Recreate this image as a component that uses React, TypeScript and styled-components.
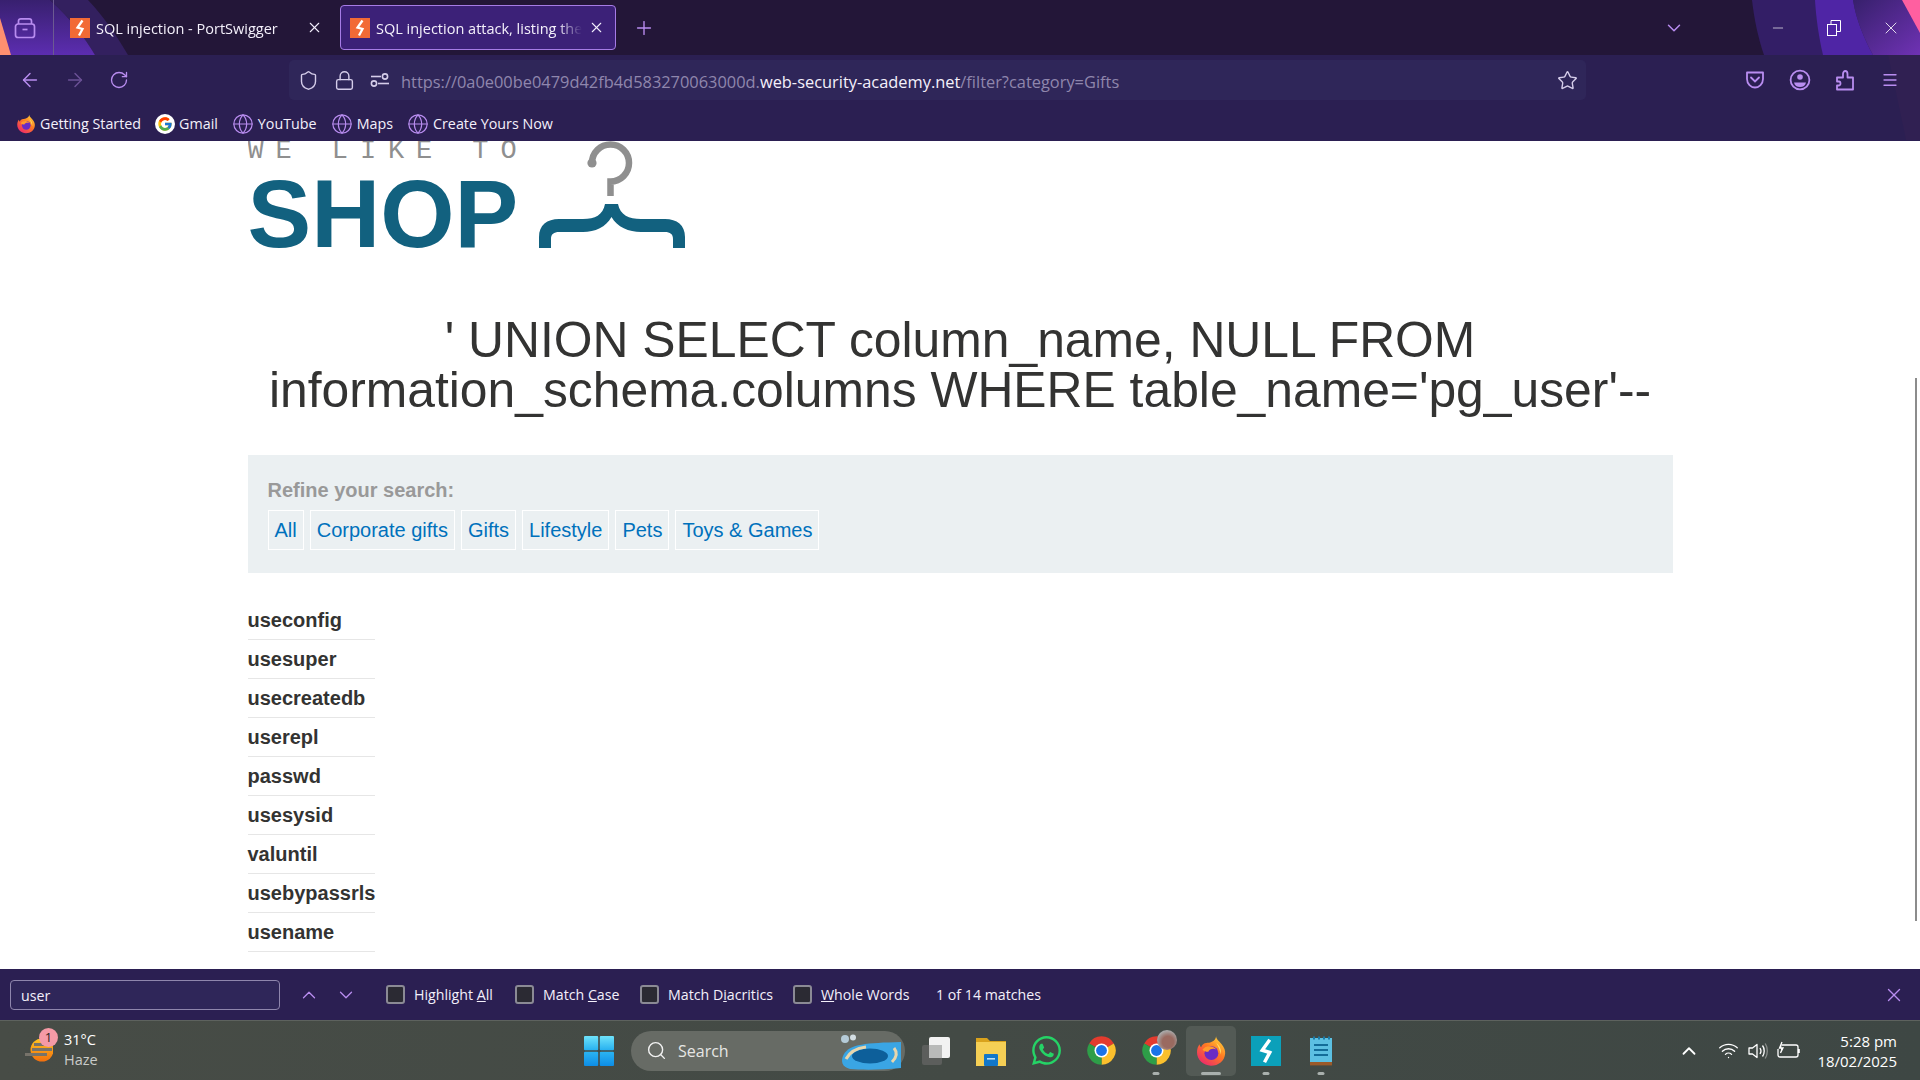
import styled, { createGlobalStyle } from 'styled-components';
import {
    ArrowLeft,
    ArrowRight,
    ChevronDown,
    ChevronUp,
    Globe,
    Lock,
    Menu,
    Minus,
    Plus,
    RotateCw,
    Search,
    Shield,
    Star,
    Wifi,
    X,
} from 'lucide-react';
import { FaWhatsapp } from 'react-icons/fa';
import { FcGoogle } from 'react-icons/fc';

const UI_FONT = '"Open Sans", "Noto Sans", sans-serif';
const ACCENT = '#b98df0';

const GlobalStyle = createGlobalStyle`
    html, body {
        margin: 0;
        padding: 0;
        height: 100%;
        overflow: hidden;
        background: #fff;
    }
    * {
        box-sizing: border-box;
    }
`;

const Bolt = ({ bg, size }: { bg: string; size: number }) => (
    <svg width={size} height={size} viewBox="0 0 20 20">
        <rect width="20" height="20" fill={bg} />
        <path d="M12.5 2.5 L7.5 9.5 L12.5 11 L9 17.5" fill="none" stroke="#fff" strokeWidth="2.3" />
    </svg>
);

const FirefoxIcon = ({ size, id }: { size: number; id: string }) => (
    <svg width={size} height={size} viewBox="0 0 24 24">
        <defs>
            <linearGradient id={id} x1="0.85" y1="0.05" x2="0.2" y2="0.95">
                <stop offset="0" stopColor="#ffd23a" />
                <stop offset="0.45" stopColor="#ff7a22" />
                <stop offset="1" stopColor="#ee2a6b" />
            </linearGradient>
        </defs>
        <path
            d="M15.8 1 C16 3.5 18.4 4.8 20 7 C22 9.6 22.8 11.8 22.6 14 C22.2 19.4 17.6 23 12 23 C6.2 23 1.5 18.6 1.5 13 C1.5 10.6 2.2 8.6 3.4 7 C3.6 8 4 8.8 4.6 9.2 C5.2 7.2 6.8 6 8.5 6 C11 6 15.6 5 15.8 1 Z"
            fill={`url(#${id})`}
        />
        <circle cx="12.3" cy="13.6" r="5.2" fill="#6a2bc4" />
        <path d="M5.6 11 C8 7.8 13 7.6 16 10.8 C13.6 9.8 10.6 10.6 10 12.6 C8.6 12.8 7 12.2 5.6 11 Z" fill="#ff9a2c" />
        <path d="M16 6 C18.6 8 20 11 19.4 14.6 C18.8 11.4 17.6 8.8 16 6 Z" fill="#ffe066" />
    </svg>
);

const ChromeIcon = ({ size }: { size: number }) => (
    <svg width={size} height={size} viewBox="0 0 24 24">
        <path d="M12 12 L2.47 6.5 A11 11 0 0 1 21.53 6.5 Z" fill="#e33b2e" />
        <path d="M12 12 L21.53 6.5 A11 11 0 0 1 12 23 Z" fill="#fbc02d" />
        <path d="M12 12 L12 23 A11 11 0 0 1 2.47 6.5 Z" fill="#2e9e48" />
        <circle cx="12" cy="12" r="5.4" fill="#fff" />
        <circle cx="12" cy="12" r="4.2" fill="#1a73e8" />
    </svg>
);

const CollectionIcon = () => (
    <svg width="22" height="22" viewBox="0 0 22 22" fill="none" stroke={ACCENT} strokeWidth="1.7">
        <path d="M4.5 7 V4 C4.5 2.6 5.4 1.8 6.8 1.8 H15.2 C16.6 1.8 17.5 2.6 17.5 4 V7" />
        <rect x="1.5" y="7" width="19" height="13.5" rx="2.6" />
        <path d="M8.5 12.5 H13.5" />
    </svg>
);

const PermissionIcon = () => (
    <svg width="20" height="16" viewBox="0 0 20 16" fill="none" stroke="#d5cdea" strokeWidth="1.6">
        <path d="M1 4.5 H11" />
        <circle cx="15" cy="4.5" r="2.6" />
        <circle cx="4" cy="11.5" r="2.6" />
        <path d="M8 11.5 H19" />
    </svg>
);

const PocketIcon = () => (
    <svg width="20" height="18" viewBox="0 0 20 18" fill="none" stroke={ACCENT} strokeWidth="1.8">
        <path d="M2 1.5 H18 V8 C18 12.8 14 16.5 10 16.5 C6 16.5 2 12.8 2 8 Z" strokeLinejoin="round" />
        <path d="M6 6.5 L10 10.5 L14 6.5" strokeLinecap="round" />
    </svg>
);

const AccountIcon = () => (
    <svg width="22" height="22" viewBox="0 0 22 22" fill="none">
        <circle cx="11" cy="11" r="9.4" stroke={ACCENT} strokeWidth="1.8" />
        <circle cx="11" cy="8" r="2.8" fill={ACCENT} />
        <path d="M5 13.5 H17 C16.5 16.5 14 18 11 18 C8 18 5.5 16.5 5 13.5 Z" fill={ACCENT} />
    </svg>
);

const PuzzleIcon = () => (
    <svg width="20" height="22" viewBox="0 0 20 22" fill="none" stroke={ACCENT} strokeWidth="1.8" strokeLinejoin="round">
        <path d="M2 20.5 V16.5 H4 C6 16.5 6 12.5 4 12.5 H2 V8.5 H8 V5 C8 1 12.5 1 12.5 5 V8.5 H18 V20.5 Z" />
    </svg>
);

const RestoreIcon = () => (
    <svg width="14" height="16" viewBox="0 0 14 16" fill="none" stroke="#fff" strokeWidth="1">
        <rect x="0.5" y="4.5" width="9" height="11" />
        <path d="M4 4.5 V0.5 H13.5 V11.5 H9.5" />
    </svg>
);

const WeatherIcon = () => (
    <svg width="28" height="28" viewBox="0 0 28 28">
        <defs>
            <linearGradient id="sun-fill" x1="0" y1="0" x2="0" y2="1">
                <stop offset="0" stopColor="#ffc51f" />
                <stop offset="1" stopColor="#f26f0e" />
            </linearGradient>
        </defs>
        <circle cx="17" cy="13" r="11.5" fill="url(#sun-fill)" />
        <path d="M9 7.5 H26 M7 12.5 H27 M0 17.5 H22" stroke="#77736a" strokeWidth="2.8" />
    </svg>
);

const WindowsIcon = () => (
    <svg width="30" height="30" viewBox="0 0 30 30">
        <defs>
            <linearGradient id="win-top" x1="0" y1="0" x2="0" y2="1">
                <stop offset="0" stopColor="#6fe3fb" />
                <stop offset="1" stopColor="#27b0f0" />
            </linearGradient>
            <linearGradient id="win-bottom" x1="0" y1="0" x2="0" y2="1">
                <stop offset="0" stopColor="#2bb4f2" />
                <stop offset="1" stopColor="#0d8de6" />
            </linearGradient>
        </defs>
        <rect x="0" y="0" width="14.2" height="14.2" rx="1" fill="url(#win-top)" />
        <rect x="15.8" y="0" width="14.2" height="14.2" rx="1" fill="url(#win-top)" />
        <rect x="0" y="15.8" width="14.2" height="14.2" rx="1" fill="url(#win-bottom)" />
        <rect x="15.8" y="15.8" width="14.2" height="14.2" rx="1" fill="url(#win-bottom)" />
    </svg>
);

const SearchPicture = () => (
    <svg width="70" height="38" viewBox="0 0 70 38">
        <circle cx="13" cy="7" r="4" fill="#b5cbd8" />
        <circle cx="21" cy="5.5" r="3" fill="#d3dee3" />
        <path d="M12 22 C18 12 34 11 69 10 V36 C50 38 30 38 18 37 C10 35 8 29 12 22 Z" fill="#3aa5e4" />
        <ellipse cx="38" cy="24" rx="18" ry="7.5" fill="#0d5f9a" />
        <path d="M14 27 C18 19 26 16 34 15" stroke="#e8d6ad" strokeWidth="3" fill="none" />
        <path d="M62 16 C66 21 64 26 60 30" stroke="#e8d6ad" strokeWidth="3" fill="none" />
    </svg>
);

const TaskViewIcon = () => (
    <svg width="30" height="30" viewBox="0 0 30 30">
        <rect x="1" y="9" width="20" height="20" rx="2" fill="#5c5e5c" />
        <rect x="8" y="1" width="21" height="21" rx="2" fill="#f2f2f2" />
        <rect x="8" y="9" width="13" height="13" fill="#b9bab9" />
    </svg>
);

const FolderIcon = () => (
    <svg width="30" height="30" viewBox="0 0 30 30">
        <path d="M0 2 H11 L14 5 H30 V30 H0 Z" fill="#d9a21c" />
        <rect y="6" width="30" height="24" fill="#f5cf55" />
        <rect x="8" y="18" width="14" height="12" rx="1" fill="#1277c9" />
        <rect x="11" y="22" width="8" height="1.6" fill="#b9e0f7" />
    </svg>
);

const NotepadIcon = () => (
    <svg width="24" height="30" viewBox="0 0 24 30">
        <rect x="1" y="2" width="22" height="25" fill="#5cc0e2" />
        <rect x="1" y="26" width="22" height="3.4" fill="#9b5a2a" />
        <path d="M4 2 H21" stroke="#1b7aa6" strokeWidth="3" strokeDasharray="2 3" />
        <path d="M5 9 H19 M5 14 H19 M5 19 H19" stroke="#136d99" strokeWidth="2" />
    </svg>
);

const VolumeIcon = () => (
    <svg width="20" height="18" viewBox="0 0 20 18" fill="none" stroke="#fff" strokeWidth="1.3">
        <path d="M1 6 H4.5 L9 2.5 V15.5 L4.5 12 H1 Z" strokeLinejoin="round" />
        <path d="M12 6 C13.2 7.8 13.2 10.2 12 12" />
        <path d="M14.5 3.5 C16.8 6.5 16.8 11.5 14.5 14.5" />
        <path d="M17.2 1.5 C20 5.5 20 12.5 17.2 16.5" stroke="#8b8f8c" />
    </svg>
);

const BatteryIcon = () => (
    <svg width="24" height="20" viewBox="0 0 24 20" fill="none" stroke="#fff" strokeWidth="1.3">
        <path d="M5 4 H19 C20.2 4 21 4.8 21 6 V14 C21 15.2 20.2 16 19 16 H3 C1.8 16 1 15.2 1 14 V8" />
        <path d="M21.8 8 V12" strokeWidth="2" />
        <path d="M5 1 L2.5 7 H6 L3.5 12" fill="#fff" />
    </svg>
);

const Bookmark = ({ icon, label }: { icon: React.ReactNode; label: string }) => (
    <BookmarkItem>
        {icon}
        <span>{label}</span>
    </BookmarkItem>
);

const tabs = [
    { title: 'SQL injection - PortSwigger', active: false },
    { title: 'SQL injection attack, listing the database contents', active: true },
];

const categories = ['All', 'Corporate gifts', 'Gifts', 'Lifestyle', 'Pets', 'Toys & Games'];

const columns = ['useconfig', 'usesuper', 'usecreatedb', 'userepl', 'passwd', 'usesysid', 'valuntil', 'usebypassrls', 'usename'];

const findOptions = [
    { before: 'Highlight ', key: 'A', after: 'll', width: 129 },
    { before: 'Match ', key: 'C', after: 'ase', width: 125 },
    { before: 'Match D', key: 'i', after: 'acritics', width: 153 },
    { before: '', key: 'W', after: 'hole Words', width: 134 },
];

const App = () => (
    <>
        <GlobalStyle />
        <Window>
            <BrowserTop>
                <ThemeArt width="1920" height="141" viewBox="0 0 1920 141">
                    <defs>
                        <linearGradient id="art-left" x1="0" y1="0" x2="0" y2="1">
                            <stop offset="0" stopColor="#38206f" />
                            <stop offset="1" stopColor="#5c2db0" />
                        </linearGradient>
                        <linearGradient id="art-right" x1="0" y1="0" x2="1" y2="1">
                            <stop offset="0" stopColor="#37206c" />
                            <stop offset="1" stopColor="#6f32b4" />
                        </linearGradient>
                    </defs>
                    <path d="M50 0 H88 C105 18 118 38 128 55 H95 C85 38 70 18 50 0 Z" fill="#33205f" />
                    <path d="M0 0 H50 C70 18 85 38 95 55 H0 Z" fill="url(#art-left)" />
                    <path d="M0 18 L11 55 H0 Z" fill="#ff8f70" />
                    <path d="M1752 0 H1920 V55 H1764 C1758 38 1754 18 1752 0 Z" fill="#331e66" />
                    <path d="M1815 0 H1853 C1856 20 1865 40 1873 55 H1823 C1819 38 1816 18 1815 0 Z" fill="#4f25a5" />
                    <path d="M1853 0 H1920 V55 H1873 C1865 40 1856 20 1853 0 Z" fill="url(#art-right)" />
                    <path d="M1902 0 H1920 V33 Z" fill="#ff5fa0" />
                    <path d="M1888 55 L1906 140 H1920 V55 Z" fill="#302052" />
                </ThemeArt>
                <TabBar>
                    <CollectionButton>
                        <CollectionIcon />
                    </CollectionButton>
                    <TabList>
                        {tabs.map((tab) => (
                            <Tab key={tab.title} $active={tab.active}>
                                <Bolt bg="#f26a35" size={20} />
                                <TabTitle>{tab.title}</TabTitle>
                                <X size={17} color="#f2eefc" strokeWidth={1.5} />
                            </Tab>
                        ))}
                    </TabList>
                    <NewTab>
                        <Plus size={22} color={ACCENT} strokeWidth={1.5} />
                    </NewTab>
                    <TabOverflow>
                        <ChevronDown size={22} color={ACCENT} strokeWidth={1.6} />
                    </TabOverflow>
                    <WindowButtons>
                        <WindowButton>
                            <Minus size={16} color="#fff" strokeWidth={1} />
                        </WindowButton>
                        <WindowButton>
                            <RestoreIcon />
                        </WindowButton>
                        <WindowButton>
                            <X size={20} color="#fff" strokeWidth={1} />
                        </WindowButton>
                    </WindowButtons>
                </TabBar>
                <NavBar>
                    <NavButtons>
                        <ArrowLeft size={22} color={ACCENT} strokeWidth={1.6} />
                        <ArrowRight size={22} color="#6b5196" strokeWidth={1.6} />
                        <RotateCw size={20} color={ACCENT} strokeWidth={1.6} />
                    </NavButtons>
                    <UrlBar>
                        <UrlIcons>
                            <Shield size={21} color="#d5cdea" strokeWidth={1.6} />
                            <Lock size={21} color="#d5cdea" strokeWidth={1.6} />
                            <PermissionIcon />
                        </UrlIcons>
                        <UrlText>
                            https://0a0e00be0479d42fb4d583270063000d.<UrlDomain>web-security-academy.net</UrlDomain>/filter?category=Gifts
                        </UrlText>
                        <Star size={21} color="#d5cdea" strokeWidth={1.6} />
                    </UrlBar>
                    <ToolIcons>
                        <ToolCell>
                            <PocketIcon />
                        </ToolCell>
                        <ToolCell>
                            <AccountIcon />
                        </ToolCell>
                        <ToolCell>
                            <PuzzleIcon />
                        </ToolCell>
                        <ToolCell>
                            <Menu size={18} color={ACCENT} strokeWidth={1.7} />
                        </ToolCell>
                    </ToolIcons>
                </NavBar>
                <BookmarkBar>
                    <Bookmark icon={<FirefoxIcon size={20} id="ff-bookmark" />} label="Getting Started" />
                    <Bookmark
                        icon={
                            <GoogleBadge>
                                <FcGoogle size={16} />
                            </GoogleBadge>
                        }
                        label="Gmail"
                    />
                    <Bookmark icon={<Globe size={22} color={ACCENT} strokeWidth={1.3} />} label="YouTube" />
                    <Bookmark icon={<Globe size={22} color={ACCENT} strokeWidth={1.3} />} label="Maps" />
                    <Bookmark icon={<Globe size={22} color={ACCENT} strokeWidth={1.3} />} label="Create Yours Now" />
                </BookmarkBar>
            </BrowserTop>

            <Page>
                <Container>
                    <Logo>
                        <LogoWords>
                            <LogoTagline>WE LIKE TO</LogoTagline>
                            <LogoName>SHOP</LogoName>
                        </LogoWords>
                        <svg width="146" height="112" viewBox="0 0 146 112" fill="none">
                            <path d="M53 22 A18.5 18.5 0 1 1 71.5 40.5 V55" stroke="#8f8f8f" strokeWidth="6.5" />
                            <circle cx="53" cy="22" r="4.6" fill="#8f8f8f" />
                            <path
                                d="M0 107 V96 C0 84 8 78 20 78 H44 C56 78 64 74 66 63 H79 C81 74 90 78 102 78 H126 C138 78 146 84 146 96 V107 H134 V98 C134 93 131 91 126 91 H102 C90 91 78 86 72.5 76 C67 86 56 91 44 91 H20 C15 91 12 93 12 98 V107 Z"
                                fill="#12617f"
                            />
                        </svg>
                    </Logo>
                    <Heading>' UNION SELECT column_name, NULL FROM information_schema.columns WHERE table_name='pg_user'--</Heading>
                    <Filters>
                        <FilterLabel>Refine your search:</FilterLabel>
                        <FilterLinks>
                            {categories.map((category) => (
                                <FilterLink key={category}>{category}</FilterLink>
                            ))}
                        </FilterLinks>
                    </Filters>
                    <ResultTable>
                        <tbody>
                            {columns.map((column) => (
                                <tr key={column}>
                                    <ResultCell>{column}</ResultCell>
                                </tr>
                            ))}
                        </tbody>
                    </ResultTable>
                </Container>
                <ScrollThumb />
            </Page>

            <FindBar>
                <FindInput>user</FindInput>
                <FindArrows>
                    <ChevronUp size={22} color={ACCENT} strokeWidth={1.4} />
                    <ChevronDown size={22} color={ACCENT} strokeWidth={1.4} />
                </FindArrows>
                {findOptions.map((option) => (
                    <FindOption key={option.before + option.key} $width={option.width}>
                        <FindCheck />
                        <span>
                            {option.before}
                            <u>{option.key}</u>
                            {option.after}
                        </span>
                    </FindOption>
                ))}
                <FindCount>1 of 14 matches</FindCount>
                <FindClose>
                    <X size={22} color={ACCENT} strokeWidth={1.5} />
                </FindClose>
            </FindBar>

            <Taskbar>
                <Weather>
                    <WeatherGlyph>
                        <WeatherIcon />
                        <WeatherBadge>1</WeatherBadge>
                    </WeatherGlyph>
                    <WeatherText>
                        <span>31°C</span>
                        <WeatherSub>Haze</WeatherSub>
                    </WeatherText>
                </Weather>
                <TaskCenter>
                    <StartButton>
                        <WindowsIcon />
                    </StartButton>
                    <SearchPill>
                        <Search size={21} color="#f2f2f2" strokeWidth={1.6} />
                        <SearchLabel>Search</SearchLabel>
                        <SearchPicture />
                    </SearchPill>
                    <TaskIcons>
                        <TaskIcon>
                            <TaskViewIcon />
                        </TaskIcon>
                        <TaskIcon>
                            <FolderIcon />
                        </TaskIcon>
                        <TaskIcon>
                            <FaWhatsapp size={33} color="#25d366" />
                        </TaskIcon>
                        <TaskIcon>
                            <ChromeIcon size={31} />
                        </TaskIcon>
                        <TaskIcon $running>
                            <ChromeIcon size={31} />
                            <ProfileBadge />
                        </TaskIcon>
                        <TaskIcon $running $active>
                            <FirefoxIcon size={32} id="ff-taskbar" />
                        </TaskIcon>
                        <TaskIcon $running>
                            <Bolt bg="#0ba0ba" size={30} />
                        </TaskIcon>
                        <TaskIcon $running>
                            <NotepadIcon />
                        </TaskIcon>
                    </TaskIcons>
                </TaskCenter>
                <Tray>
                    <ChevronUp size={22} color="#fff" strokeWidth={2} />
                    <TrayIcons>
                        <Wifi size={21} color="#fff" strokeWidth={1.5} />
                        <VolumeIcon />
                        <BatteryIcon />
                    </TrayIcons>
                    <Clock>
                        <span>5:28 pm</span>
                        <span>18/02/2025</span>
                    </Clock>
                </Tray>
            </Taskbar>
        </Window>
    </>
);

export default App;

const Window = styled.div`
    width: 1920px;
    height: 1080px;
    display: flex;
    flex-direction: column;
    overflow: hidden;
    font-family: ${UI_FONT};
`;

const BrowserTop = styled.header`
    position: relative;
    height: 141px;
    flex: none;
    background: linear-gradient(#231638 0 55px, #2b1f52 55px);
    color: #f4f0fb;
`;

const ThemeArt = styled.svg`
    position: absolute;
    top: 0;
    left: 0;
    pointer-events: none;
`;

const TabBar = styled.div`
    position: relative;
    height: 55px;
    display: flex;
    align-items: center;
`;

const CollectionButton = styled.div`
    width: 54px;
    height: 55px;
    flex: none;
    display: flex;
    align-items: center;
    justify-content: center;
    padding-right: 4px;
    border-right: 1px solid #6c5a92;
`;

const TabList = styled.div`
    display: flex;
    margin-left: 6px;
`;

const Tab = styled.div<{ $active: boolean }>`
    width: ${(p) => (p.$active ? '276px' : '280px')};
    height: 45px;
    display: flex;
    align-items: center;
    padding: 0 ${(p) => (p.$active ? '10px' : '16px')} 0 9px;
    border-radius: 4px;
    border: 1px solid ${(p) => (p.$active ? '#a67ce6' : 'transparent')};
    background: ${(p) => (p.$active ? '#3c2178' : 'transparent')};
`;

const TabTitle = styled.span`
    flex: 1;
    min-width: 0;
    margin: 0 6px;
    padding-top: 1px;
    font-size: 14.5px;
    white-space: nowrap;
    overflow: hidden;
    mask-image: linear-gradient(to right, #000 88%, transparent);
`;

const NewTab = styled.div`
    margin-left: 17px;
    display: flex;
`;

const TabOverflow = styled.div`
    margin-left: auto;
    margin-right: 65px;
    display: flex;
`;

const WindowButtons = styled.div`
    display: flex;
    margin-right: 1px;
`;

const WindowButton = styled.div`
    width: 56.5px;
    height: 55px;
    display: flex;
    align-items: center;
    justify-content: center;
`;

const NavBar = styled.div`
    position: relative;
    height: 50px;
    display: flex;
    align-items: center;
`;

const NavButtons = styled.div`
    width: 289px;
    flex: none;
    display: flex;
    align-items: center;
    gap: 23px;
    padding-left: 19px;
`;

const UrlBar = styled.div`
    width: 1297px;
    height: 40px;
    flex: none;
    display: flex;
    align-items: center;
    padding: 0 8px 0 9px;
    border-radius: 5px;
    background: #2f2659;
`;

const UrlIcons = styled.div`
    width: 103px;
    flex: none;
    display: flex;
    align-items: center;
    gap: 15px;
`;

const UrlText = styled.div`
    flex: 1;
    font-size: 16.4px;
    color: #8f86ad;
    white-space: nowrap;
    padding-top: 3px;
`;

const UrlDomain = styled.span`
    color: #f4f0fb;
`;

const ToolIcons = styled.div`
    flex: 1;
    display: flex;
    align-items: center;
    justify-content: flex-end;
    padding-right: 8px;
`;

const ToolCell = styled.div`
    width: 45px;
    display: flex;
    align-items: center;
    justify-content: center;
`;

const BookmarkBar = styled.nav`
    position: relative;
    height: 36px;
    display: flex;
    align-items: center;
    gap: 14px;
    padding: 1px 0 0 16px;
`;

const BookmarkItem = styled.div`
    display: flex;
    align-items: center;
    gap: 4px;
    font-size: 14.3px;
    white-space: nowrap;
`;

const GoogleBadge = styled.span`
    width: 20px;
    height: 20px;
    display: flex;
    align-items: center;
    justify-content: center;
    border-radius: 50%;
    background: #fff;
`;

const Page = styled.main`
    position: relative;
    flex: 1;
    min-height: 0;
    overflow: hidden;
    background: #fff;
    color: #333332;
    font-family: "Liberation Sans", Arial, sans-serif;
`;

const Container = styled.div`
    width: 1425px;
    margin: 0 auto;
`;

const Logo = styled.div`
    height: 112px;
    display: flex;
    align-items: flex-start;
    overflow: hidden;
`;

const LogoWords = styled.div`
    width: 291px;
    flex: none;
`;

const LogoTagline = styled.div`
    height: 28px;
    font-family: "Liberation Mono", monospace;
    font-size: 27px;
    line-height: 20px;
    letter-spacing: 11.9px;
    color: #8f8f8f;
    white-space: nowrap;
`;

const LogoName = styled.div`
    font-size: 95.5px;
    font-weight: 700;
    line-height: 90px;
    color: #12617f;
`;

const Heading = styled.h1`
    margin: 62px 0 40px;
    font-size: 49.8px;
    font-weight: 400;
    line-height: 50px;
    text-align: center;
    color: #333332;
`;

const Filters = styled.section`
    height: 118px;
    padding: 21px 20px 0;
    background: #ebf0f2;
`;

const FilterLabel = styled.div`
    font-size: 20px;
    font-weight: 700;
    line-height: 28px;
    color: #999;
`;

const FilterLinks = styled.div`
    display: flex;
    gap: 6px;
    margin-top: 6px;
`;

const FilterLink = styled.a`
    height: 40px;
    padding: 0 6px;
    border: 1px solid #fff;
    font-size: 20px;
    line-height: 38px;
    color: #0071bc;
`;

const ResultTable = styled.table`
    margin-top: 27px;
    border-collapse: collapse;
`;

const ResultCell = styled.td`
    height: 39px;
    padding: 2px 0 0;
    font-size: 20px;
    font-weight: 700;
    color: #333332;
    border-bottom: 1px solid #e6e6e6;
`;

const ScrollThumb = styled.div`
    position: absolute;
    top: 237px;
    right: 3px;
    width: 2px;
    height: 543px;
    background: #8c8c8c;
`;

const FindBar = styled.div`
    height: 51px;
    flex: none;
    display: flex;
    align-items: center;
    padding-left: 10px;
    background: #2b1f52;
    color: #f4f0fb;
    font-size: 14.2px;
`;

const FindInput = styled.div`
    width: 270px;
    height: 30px;
    padding: 0 10px;
    line-height: 29px;
    border: 1px solid #8f86ad;
    border-radius: 4px;
    background: #2f2659;
`;

const FindArrows = styled.div`
    width: 106px;
    display: flex;
    gap: 15px;
    padding-left: 18px;
`;

const FindOption = styled.label<{ $width: number }>`
    width: ${(p) => p.$width}px;
    display: flex;
    align-items: center;
    gap: 9px;
    white-space: nowrap;
`;

const FindCheck = styled.span`
    width: 19px;
    height: 19px;
    flex: none;
    border: 2px solid #8b8a95;
    border-radius: 3px;
    background: #2b2a33;
`;

const FindCount = styled.span`
    margin-left: 9px;
`;

const FindClose = styled.div`
    margin-left: auto;
    margin-right: 15px;
    display: flex;
`;

const Taskbar = styled.footer`
    height: 60px;
    flex: none;
    display: flex;
    align-items: center;
    border-top: 1px solid #5d625e;
    background: linear-gradient(to right, #474c46, #434a45 50%, #3e4744);
    color: #fff;
`;

const Weather = styled.div`
    width: 584px;
    flex: none;
    display: flex;
    align-items: center;
    gap: 11px;
    padding-left: 25px;
`;

const WeatherGlyph = styled.div`
    position: relative;
    display: flex;
`;

const WeatherBadge = styled.span`
    position: absolute;
    top: -9px;
    left: 14px;
    width: 19px;
    height: 19px;
    border-radius: 50%;
    background: #f59aa6;
    color: #2a1f20;
    font-size: 13px;
    line-height: 19px;
    text-align: center;
`;

const WeatherText = styled.div`
    display: flex;
    flex-direction: column;
    padding-bottom: 2px;
    font-size: 14.5px;
    line-height: 20px;
`;

const WeatherSub = styled.span`
    color: #c9cbc9;
`;

const TaskCenter = styled.div`
    display: flex;
    align-items: center;
`;

const StartButton = styled.div`
    width: 47px;
    display: flex;
`;

const SearchPill = styled.div`
    width: 274px;
    height: 40px;
    display: flex;
    align-items: center;
    padding: 0 3px 0 15px;
    border-radius: 20px;
    background: #676b65;
`;

const SearchLabel = styled.span`
    flex: 1;
    margin-left: 11px;
    font-size: 16px;
    color: #e6e6e4;
`;

const TaskIcons = styled.div`
    display: flex;
    margin-left: 6px;
`;

const TaskIcon = styled.div<{ $running?: boolean; $active?: boolean }>`
    position: relative;
    width: 50px;
    height: 50px;
    margin-right: 5px;
    display: flex;
    align-items: center;
    justify-content: center;
    border-radius: 5px;
    background: ${(p) => (p.$active ? '#535a55' : 'transparent')};

    &::after {
        content: '';
        display: ${(p) => (p.$running ? 'block' : 'none')};
        position: absolute;
        bottom: 1px;
        left: 50%;
        width: ${(p) => (p.$active ? '20px' : '7px')};
        height: 3px;
        border-radius: 2px;
        transform: translateX(-50%);
        background: #a9b0ad;
    }
`;

const ProfileBadge = styled.span`
    position: absolute;
    top: 4px;
    right: 4px;
    width: 20px;
    height: 20px;
    border-radius: 50%;
    background: radial-gradient(circle at 55% 60%, #9a6a60 0 35%, #a9a9a9 70%);
`;

const Tray = styled.div`
    flex: 1;
    display: flex;
    align-items: center;
    justify-content: flex-end;
    padding-right: 23px;
`;

const TrayIcons = styled.div`
    display: flex;
    align-items: center;
    gap: 9px;
    margin: 0 16px 0 18px;
`;

const Clock = styled.div`
    display: flex;
    flex-direction: column;
    align-items: flex-end;
    font-size: 15px;
    line-height: 20px;
`;
